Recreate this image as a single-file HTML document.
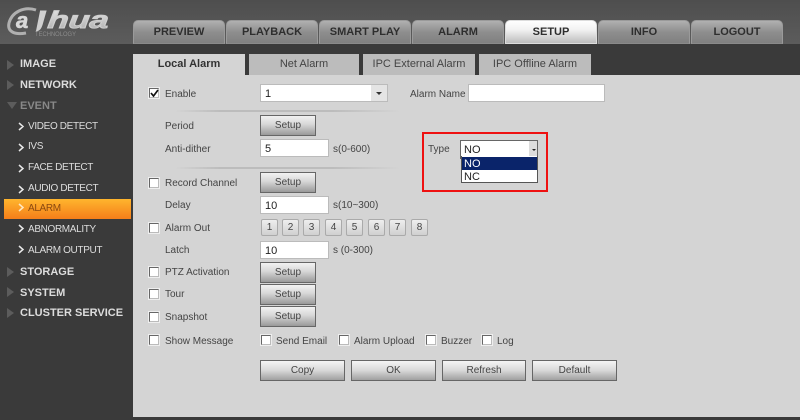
<!DOCTYPE html>
<html><head><meta charset="utf-8">
<style>
html,body{margin:0;padding:0}
body{width:800px;height:420px;position:relative;overflow:hidden;background:#3a3a3a;font-family:"Liberation Sans",sans-serif;font-size:10px;color:#444}
div,span{position:absolute;box-sizing:border-box;white-space:nowrap}
.hdr{left:0;top:0;width:800px;height:44px;background:linear-gradient(#4e4e4e,#5c5c5c)}
.t{top:20px;height:24px;width:92px;border:1px solid #9a9a9a;border-bottom:1px solid #8a8a8a;border-radius:5px 5px 0 0;background:linear-gradient(#b0b0b0,#8e8e8e 50%,#808080);color:#2e2e2e;font-weight:bold;font-size:11px;line-height:23px;text-align:center}
.t.on{background:linear-gradient(#fff,#f2f2f2 40%,#bdbdbd);border-color:#ddd}
.c{left:133px;top:75px;width:667px;height:342px;background:#d4d4d4}
.st{top:54px;height:21px;background:#bcbcbc;font-size:11px;line-height:21px;text-align:center;color:#444}
.m{left:20px;color:#ddd;font-weight:bold;font-size:11px;line-height:16px}
.s{left:28px;color:#ddd;font-size:10px;line-height:16px;letter-spacing:-.35px}
.a{left:7px;width:0;height:0;border-left:7px solid #5c5c5c;border-top:5px solid transparent;border-bottom:5px solid transparent}
.l{font-size:10px;line-height:16px;color:#444}
.cb{width:10px;height:10px;background:#fff;border:1px solid #666;border-right-color:#bbb;border-bottom-color:#bbb;box-shadow:0 0 0 1px #eee}
.in{height:18px;background:#fff;border:1px solid #bbb;color:#222;font-size:11px;line-height:18px;padding-left:4px}
.b{height:21px;width:56px;left:260px;background:linear-gradient(#f2f2f2,#d6d6d6 45%,#999);border:1px solid #666;font-size:10px;line-height:20px;text-align:center;color:#444}
.n{top:219px;width:17px;height:17px;background:linear-gradient(#eee,#d0d0d0);border:1px solid #aaa;border-radius:2px;font-size:10px;line-height:16px;text-align:center;color:#444}
.bb{top:360px;width:85px;height:21px;background:linear-gradient(#f4f4f4,#d8d8d8 50%,#a0a0a0);border:1px solid #666;font-size:10px;line-height:19px;text-align:center;color:#444}
.hr{height:2px;background:linear-gradient(90deg,#d4d4d4,#bcbcbc 20%,#bcbcbc 70%,#d4d4d4)}
</style></head><body>
<div class="hdr"></div>
<svg style="position:absolute;left:0;top:0" width="120" height="44" viewBox="0 0 120 44">
<defs><linearGradient id="g" x1="0" y1="0" x2="0" y2="1"><stop offset="0" stop-color="#e8e8e8"/><stop offset="1" stop-color="#a8a8a8"/></linearGradient></defs>
<path d="M36 10C24 6 12 12 9 23c-2 9 6 12 17 10" fill="none" stroke="#b0b0b0" stroke-width="3"/>
<text x="16" y="28" font-family="Liberation Sans" font-size="22" font-weight="bold" font-style="italic" fill="#d8d8d8" stroke="#d8d8d8" stroke-width=".6">a</text>
<path d="M40 11h6l-4 14c-1 3-2 5-6 6" fill="#cfcfcf" stroke="#cfcfcf" stroke-width="1"/>
<text transform="translate(47 28) skewX(-6)" font-family="Liberation Sans" font-size="24" font-weight="bold" font-style="italic" fill="url(#g)" stroke="#cfcfcf" stroke-width=".9" textLength="61" lengthAdjust="spacingAndGlyphs">hua</text>
<text x="35" y="36" font-family="Liberation Sans" font-size="6" fill="#8c8c8c" textLength="41" lengthAdjust="spacingAndGlyphs">TECHNOLOGY</text>
</svg>

<div class="t" style="left:133px">PREVIEW</div>
<div class="t" style="left:226px">PLAYBACK</div>
<div class="t" style="left:319px">SMART PLAY</div>
<div class="t" style="left:412px">ALARM</div>
<div class="t on" style="left:505px">SETUP</div>
<div class="t" style="left:598px">INFO</div>
<div class="t" style="left:691px">LOGOUT</div>

<div class="st" style="left:133px;width:112px;background:#d4d4d4;font-weight:bold;color:#333">Local Alarm</div>
<div class="st" style="left:249px;width:110px">Net Alarm</div>
<div class="st" style="left:363px;width:112px">IPC External Alarm</div>
<div class="st" style="left:479px;width:112px">IPC Offline Alarm</div>
<div class="c"></div>

<div class="a" style="top:60px"></div><div class="m" style="top:56px">IMAGE</div>
<div class="a" style="top:80px"></div><div class="m" style="top:77px">NETWORK</div>
<div style="left:7px;top:102px;width:0;height:0;border-top:7px solid #5c5c5c;border-left:5px solid transparent;border-right:5px solid transparent"></div><div class="m" style="top:98px;color:#888">EVENT</div>
<svg style="position:absolute;left:17px;top:120px" width="10" height="120" fill="none" stroke="#e8e8e8" stroke-width="1.5"><path d="M2 3l4 3.500-4 3.500M2 24l4 3.500-4 3.500M2 45l4 3.500-4 3.500M2 66l4 3.500-4 3.500"/></svg>
<div class="s" style="top:119px">VIDEO DETECT</div>
<div class="s" style="top:139px">IVS</div>
<div class="s" style="top:160px">FACE DETECT</div>
<div class="s" style="top:181px">AUDIO DETECT</div>
<div style="left:4px;top:199px;width:127px;height:20px;background:linear-gradient(#ffb52e,#f57e1a)"></div>
<div class="s" style="top:201px;color:#8a4a10">ALARM</div>
<div class="s" style="top:222px">ABNORMALITY</div>
<div class="s" style="top:243px">ALARM OUTPUT</div>
<svg style="position:absolute;left:17px;top:120px;z-index:2" width="10" height="140" fill="none" stroke-width="1.5"><path stroke="#ffe8c0" d="M2 84l4 3.500-4 3.500"/><path stroke="#e8e8e8" d="M2 105l4 3.500-4 3.500M2 126l4 3.500-4 3.500"/></svg>
<div class="a" style="top:267px"></div><div class="m" style="top:264px">STORAGE</div>
<div class="a" style="top:287px"></div><div class="m" style="top:285px">SYSTEM</div>
<div class="a" style="top:308px"></div><div class="m" style="top:305px">CLUSTER SERVICE</div>

<div class="cb" style="left:149px;top:88px"></div>
<svg style="position:absolute;left:150px;top:89px" width="9" height="9"><path d="M1 4l2.500 3L8 1" fill="none" stroke="#111" stroke-width="1.700"/></svg>
<div class="l" style="left:165px;top:87px">Enable</div>
<div class="in" style="left:260px;top:84px;width:128px">1</div>
<div style="left:371px;top:85px;width:16px;height:16px;background:#e4e4e4"></div>
<div style="left:376px;top:92px;width:0;height:0;border-top:3px solid #333;border-left:3px solid transparent;border-right:3px solid transparent"></div>
<div class="l" style="left:410px;top:87px">Alarm Name</div>
<div class="in" style="left:468px;top:84px;width:137px"></div>
<div class="hr" style="left:175px;top:110px;width:225px"></div>

<div class="l" style="left:165px;top:119px">Period</div>
<div class="b" style="top:115px">Setup</div>
<div class="l" style="left:165px;top:142px">Anti-dither</div>
<div class="in" style="left:260px;top:139px;width:69px">5</div>
<div class="l" style="left:333px;top:142px">s(0-600)</div>
<div class="hr" style="left:175px;top:167px;width:225px"></div>

<div style="left:422px;top:132px;width:126px;height:60px;border:2px solid #ee1111"></div>
<div class="l" style="left:428px;top:142px">Type</div>
<div style="left:460px;top:140px;width:78px;height:19px;background:#fff;border:1px solid #666;color:#222;font-size:11px;line-height:18px;padding-left:3px">NO</div>
<div style="left:529px;top:141px;width:8px;height:17px;background:#ddd"></div>
<div style="left:532px;top:149px;width:0;height:0;border-top:2px solid #222;border-left:2px solid transparent;border-right:2px solid transparent"></div>
<div style="left:461px;top:156px;width:77px;height:27px;background:#fff;border:1px solid #555;border-top:0"></div>
<div style="left:462px;top:157px;width:75px;height:13px;background:#0a246a;color:#fff;font-size:11px;line-height:14px;padding-left:2px;overflow:hidden">NO</div>
<div style="left:462px;top:170px;width:75px;height:13px;color:#222;font-size:11px;line-height:14px;padding-left:2px">NC</div>

<div class="cb" style="left:149px;top:178px"></div>
<div class="l" style="left:165px;top:176px">Record Channel</div>
<div class="b" style="top:172px">Setup</div>
<div class="l" style="left:165px;top:198px">Delay</div>
<div class="in" style="left:260px;top:196px;width:69px">10</div>
<div class="l" style="left:333px;top:198px">s(10~300)</div>
<div class="cb" style="left:149px;top:223px"></div>
<div class="l" style="left:165px;top:221px">Alarm Out</div>
<div class="n" style="left:261px">1</div><div class="n" style="left:282px">2</div><div class="n" style="left:303px">3</div><div class="n" style="left:325px">4</div><div class="n" style="left:346px">5</div><div class="n" style="left:368px">6</div><div class="n" style="left:389px">7</div><div class="n" style="left:411px">8</div>
<div class="l" style="left:165px;top:243px">Latch</div>
<div class="in" style="left:260px;top:241px;width:69px">10</div>
<div class="l" style="left:333px;top:243px">s (0-300)</div>
<div class="cb" style="left:149px;top:267px"></div>
<div class="l" style="left:165px;top:265px">PTZ Activation</div>
<div class="b" style="top:262px">Setup</div>
<div class="cb" style="left:149px;top:289px"></div>
<div class="l" style="left:165px;top:287px">Tour</div>
<div class="b" style="top:284px">Setup</div>
<div class="cb" style="left:149px;top:312px"></div>
<div class="l" style="left:165px;top:310px">Snapshot</div>
<div class="b" style="top:306px">Setup</div>
<div class="cb" style="left:149px;top:335px"></div>
<div class="l" style="left:165px;top:334px">Show Message</div>
<div class="cb" style="left:261px;top:335px"></div>
<div class="l" style="left:276px;top:334px">Send Email</div>
<div class="cb" style="left:339px;top:335px"></div>
<div class="l" style="left:354px;top:334px">Alarm Upload</div>
<div class="cb" style="left:426px;top:335px"></div>
<div class="l" style="left:441px;top:334px">Buzzer</div>
<div class="cb" style="left:482px;top:335px"></div>
<div class="l" style="left:497px;top:334px">Log</div>

<div class="bb" style="left:260px">Copy</div>
<div class="bb" style="left:351px">OK</div>
<div class="bb" style="left:442px;width:84px">Refresh</div>
<div class="bb" style="left:532px">Default</div>
</body></html>
